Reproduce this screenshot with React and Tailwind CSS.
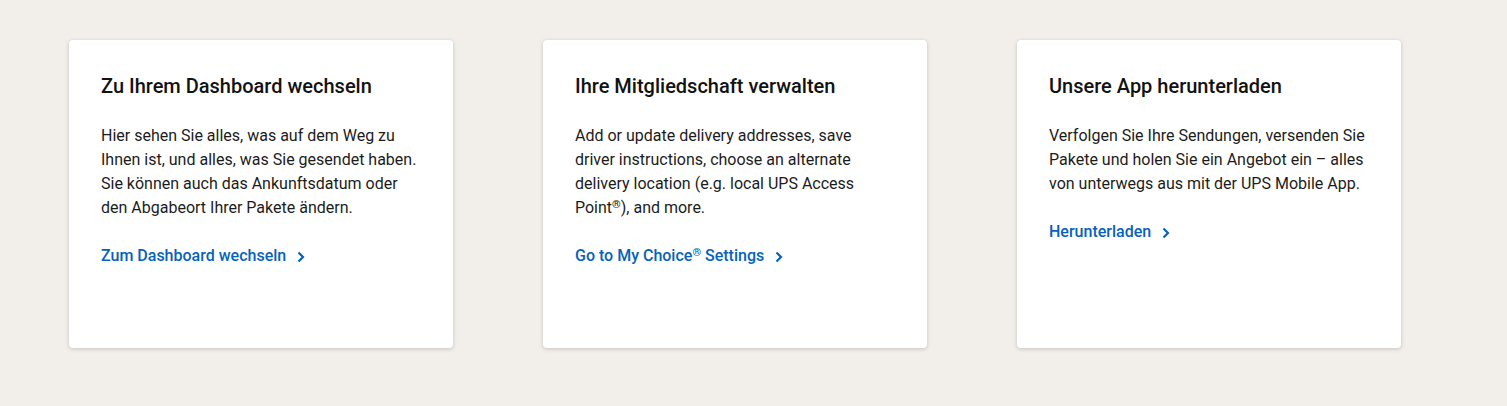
import React from "react";

function Chevron() {
  return (
    <svg width="8" height="12" viewBox="0 0 8 12" className="ml-[11px] mt-[1px]" aria-hidden="true">
      <path d="M1.5 1.5L6 6l-4.5 4.5" fill="none" stroke="currentColor" strokeWidth="2.2" />
    </svg>
  );
}

const cards = [
  {
    title: "Zu Ihrem Dashboard wechseln",
    body: "Hier sehen Sie alles, was auf dem Weg zu Ihnen ist, und alles, was Sie gesendet haben. Sie können auch das Ankunftsdatum oder den Abgabeort Ihrer Pakete ändern.",
    link: "Zum Dashboard wechseln",
  },
  {
    title: "Ihre Mitgliedschaft verwalten",
    body: (
      <>
        Add or update delivery addresses, save driver instructions, choose an alternate delivery location (e.g. local UPS Access Point
        <sup className="text-[11px] leading-none font-medium">®</sup>), and more.
      </>
    ),
    link: (
      <>
        Go to My Choice<sup className="text-[11px] leading-none">®</sup> Settings
      </>
    ),
  },
  {
    title: "Unsere App herunterladen",
    body: "Verfolgen Sie Ihre Sendungen, versenden Sie Pakete und holen Sie ein Angebot ein – alles von unterwegs aus mit der UPS Mobile App.",
    link: "Herunterladen",
  },
];

export default function App() {
  return (
    <div className="min-h-[406px] bg-[#f2eeea] pt-10 pl-[69px] font-['Roboto',sans-serif]">
      <div className="flex gap-[90px]">
        {cards.map((c, i) => (
          <div
            key={i}
            className="h-[308px] w-[384px] rounded bg-white px-8 pt-8 shadow-[0_1px_4px_rgba(0,0,0,0.18)]"
          >
            <h2 className="text-[20px] leading-7 font-medium text-[#121212]">{c.title}</h2>
            <p className="mt-6 text-[16px] leading-6 text-[#1c1c1c]">{c.body}</p>
            <a href="#" className="mt-6 flex items-center text-[16px] leading-6 font-medium text-[#0662bb]">
              <span>{c.link}</span>
              <Chevron />
            </a>
          </div>
        ))}
      </div>
    </div>
  );
}
